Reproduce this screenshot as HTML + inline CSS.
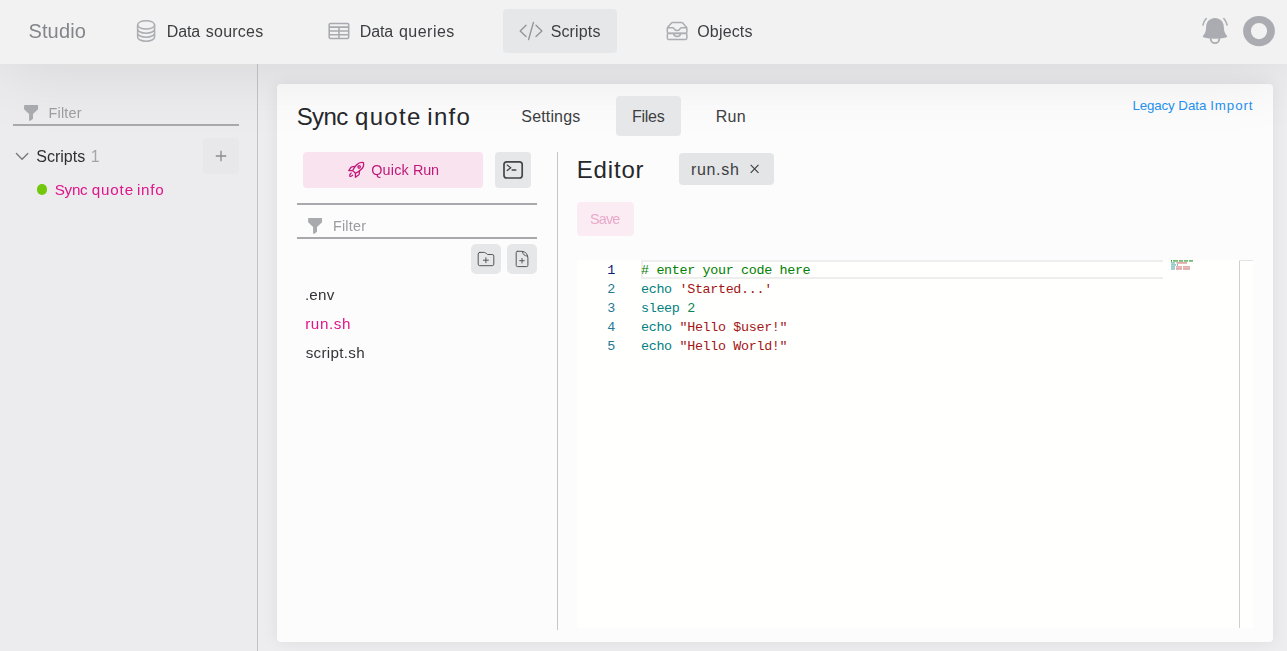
<!DOCTYPE html>
<html lang="en"><head><meta charset="utf-8"><title>Studio - Scripts</title>
<style>
html,body{margin:0;padding:0}
body{width:1287px;height:651px;overflow:hidden;position:relative;background:#ececee;font-family:"Liberation Sans",sans-serif;}
.abs{position:absolute}
.t{position:absolute;white-space:nowrap;line-height:1;font-family:"Liberation Sans",sans-serif}
#side{left:0;top:64px;width:257px;height:587px;background:#ececee}
#sideb{left:257px;top:64px;width:1px;height:587px;background:#c3c4c7}
#main{left:258px;top:64px;width:1029px;height:587px;background:#ededef}
#card{left:277px;top:84px;width:996px;height:558px;background:#fcfcfc;border-radius:4px;box-shadow:0 0 16px rgba(0,0,20,.07)}
#nav{left:0;top:0;width:1287px;height:64px;background:#f2f2f2;box-shadow:0 0 76px rgba(0,0,10,.118)}
.ln{position:absolute;background:#a8a9ad}
.btn{position:absolute;border-radius:4px;background:#e6e7e9}
svg{position:absolute;overflow:visible}
.code{position:absolute;white-space:pre;font-family:"Liberation Mono",monospace;font-size:13.4px;letter-spacing:-0.34px;line-height:19px;height:19px}
</style></head>
<body>
<div id="side" class="abs"></div><div id="sideb" class="abs"></div><div id="main" class="abs"></div>
<div id="card" class="abs"></div>
<div id="nav" class="abs"></div>
<div class="btn" style="left:503px;top:9px;width:114px;height:44px;background:#e6e7e9"></div>
<div class="btn" style="left:616px;top:96px;width:65px;height:40px;background:#e6e7e9"></div>
<div class="ln" style="left:13px;top:124px;width:226px;height:2px"></div>
<div class="btn" style="left:203px;top:138px;width:36px;height:36px;background:#e8e8ea"></div>
<div class="abs" style="left:36.8px;top:184.4px;width:10.6px;height:10.6px;border-radius:50%;background:#73c70c"></div>
<div class="btn" style="left:303px;top:152px;width:180px;height:36px;background:#f9e3ee"></div>
<div class="btn" style="left:495px;top:152px;width:36px;height:36px"></div>
<div class="ln" style="left:297px;top:203px;width:240px;height:2px"></div>
<div class="ln" style="left:297px;top:237px;width:240px;height:2px"></div>
<div class="btn" style="left:471px;top:244px;width:30px;height:30px;border-radius:5px"></div>
<div class="btn" style="left:507px;top:244px;width:30px;height:30px;border-radius:5px"></div>
<div class="abs" style="left:557px;top:152px;width:1px;height:478px;background:#c6c7c9"></div>
<div class="btn" style="left:679px;top:153px;width:95px;height:32px;background:#e4e5e7"></div>
<div class="btn" style="left:577px;top:202px;width:57px;height:34px;background:#fbecf3"></div>
<div class="abs" style="left:577px;top:260px;width:676px;height:368px;background:#fffffe"></div>
<div class="abs" style="left:641px;top:260px;width:522px;height:19px;box-sizing:border-box;border:2px solid #eeeeee;border-right:0"></div>
<div class="abs" style="left:1239px;top:260px;width:1px;height:368px;background:#d0d0d0"></div>
<div class="abs" style="left:1239px;top:260px;width:14px;height:1px;background:#e4e4e4"></div>
<div class="code" style="left:607.3px;top:260.8px;color:#0b216f">1</div>
<div class="code" style="left:641px;top:260.8px;color:#000"><span style="color:#008000"># enter your code here</span></div>
<div class="code" style="left:607.3px;top:279.8px;color:#237893">2</div>
<div class="code" style="left:641px;top:279.8px;color:#000"><span style="color:#008080">echo</span> <span style="color:#a31515">'Started...'</span></div>
<div class="code" style="left:607.3px;top:298.8px;color:#237893">3</div>
<div class="code" style="left:641px;top:298.8px;color:#000"><span style="color:#008080">sleep</span> <span style="color:#098658">2</span></div>
<div class="code" style="left:607.3px;top:317.8px;color:#237893">4</div>
<div class="code" style="left:641px;top:317.8px;color:#000"><span style="color:#008080">echo</span> <span style="color:#a31515">"Hello $user!"</span></div>
<div class="code" style="left:607.3px;top:336.8px;color:#237893">5</div>
<div class="code" style="left:641px;top:336.8px;color:#000"><span style="color:#008080">echo</span> <span style="color:#a31515">"Hello World!"</span></div>
<span class="t" id="t_title" style="left:296.66px;top:104.78px;font-size:24px;color:#26272b"><span style="letter-spacing:-0.606px">Sync</span> <span style="letter-spacing:1.313px;margin-left:0.780px">quote</span> <span style="letter-spacing:1.340px;margin-left:-1.081px">info</span></span>
<span class="t" id="t_set" style="left:521.37px;top:109.16px;font-size:16px;letter-spacing:0.149px;color:#3d3e42">Settings</span>
<span class="t" id="t_files" style="left:632.01px;top:109.16px;font-size:16px;letter-spacing:-0.288px;color:#3d3e42">Files</span>
<span class="t" id="t_run" style="left:715.81px;top:109.16px;font-size:16px;letter-spacing:0.222px;color:#3d3e42">Run</span>
<span class="t" id="t_leg" style="left:1132.50px;top:98.92px;font-size:13.33px;color:#2590ee"><span style="letter-spacing:-0.154px">Legacy</span> <span style="letter-spacing:-0.005px;margin-left:0.002px">Data</span> <span style="letter-spacing:0.926px;margin-left:0.050px">Import</span></span>
<span class="t" id="t_editor" style="left:576.78px;top:157.98px;font-size:24px;letter-spacing:0.820px;color:#26272b">Editor</span>
<span class="t" id="t_chip" style="left:690.88px;top:161.76px;font-size:16px;letter-spacing:0.704px;color:#3d3e42">run.sh</span>
<div id="txt" class="abs" style="left:0;top:0;width:1287px;height:651px;will-change:transform">
<svg style="left:0;top:0" width="1287" height="651" viewBox="0 0 1287 651"><rect x="1171.0" y="260.1" width="1.0" height="1.6" fill="#008000" fill-opacity="0.85"/><rect x="1173.0" y="260.1" width="5.0" height="1.6" fill="#008000" fill-opacity="0.6"/><rect x="1179.0" y="260.1" width="4.0" height="1.6" fill="#008000" fill-opacity="0.6"/><rect x="1184.0" y="260.1" width="4.0" height="1.6" fill="#008000" fill-opacity="0.6"/><rect x="1189.0" y="260.1" width="4.0" height="1.6" fill="#008000" fill-opacity="0.6"/><rect x="1171.0" y="262.1" width="4.0" height="1.6" fill="#1a8c8c" fill-opacity="0.5"/><rect x="1176.5" y="262.1" width="10.5" height="1.6" fill="#b02a2a" fill-opacity="0.45"/><rect x="1171.0" y="264.1" width="5.0" height="1.6" fill="#1a8c8c" fill-opacity="0.5"/><rect x="1177.0" y="264.1" width="1.0" height="1.6" fill="#098658" fill-opacity="0.6"/><rect x="1171.0" y="266.1" width="4.0" height="1.6" fill="#1a8c8c" fill-opacity="0.5"/><rect x="1176.0" y="266.1" width="6.0" height="1.6" fill="#b02a2a" fill-opacity="0.42"/><rect x="1183.0" y="266.1" width="7.0" height="1.6" fill="#b02a2a" fill-opacity="0.42"/><rect x="1171.0" y="268.1" width="4.0" height="1.6" fill="#1a8c8c" fill-opacity="0.5"/><rect x="1176.0" y="268.1" width="6.0" height="1.6" fill="#b02a2a" fill-opacity="0.45"/><rect x="1183.0" y="268.1" width="7.0" height="1.6" fill="#b02a2a" fill-opacity="0.45"/><g fill="none" stroke="#acadb2" stroke-width="1.5" stroke-linecap="round" stroke-linejoin="round">
<ellipse cx="146.1" cy="24.9" rx="8.5" ry="4.2"/>
<path d="M137.6 24.9V37M154.6 24.9V37M137.6 29a8.5 4.2 0 0 0 17 0M137.6 33a8.5 4.2 0 0 0 17 0M137.6 37a8.5 4.2 0 0 0 17 0"/>
</g>
<g fill="none" stroke="#a9aaaf" stroke-width="1.55" stroke-linejoin="round">
<rect x="329.2" y="23.5" width="19.5" height="15" rx="1.2"/>
<path d="M329.2 27.1H348.7M329.2 31H348.7M329.2 34.8H348.7M339 27.1V38.5"/>
</g>
<g fill="none" stroke="#93959b" stroke-width="1.35" stroke-linecap="round" stroke-linejoin="round">
<path d="M526 25.3L520.2 31L526 36.6M533.4 22.5L528.6 39.5M536 25.3L541.9 31L536 36.6"/>
</g>
<g fill="none" stroke="#acadb2" stroke-width="1.5" stroke-linecap="round" stroke-linejoin="round">
<path d="M667.4 27.8L671.2 23.2Q671.8 22.6 672.6 22.6H681.6Q682.4 22.6 683 23.2L686.8 27.8"/>
<path d="M668.6 27.8H672.6Q673.6 27.8 674.2 28.8Q675.2 30.6 677.1 30.6Q679 30.6 680 28.8Q680.6 27.8 681.6 27.8H685.6Q686.9 27.8 686.9 29.1V32Q686.9 33.3 685.6 33.3H668.6Q667.3 33.3 667.3 32V29.1Q667.3 27.8 668.6 27.8Z"/>
<path d="M668.6 33.6H685.6Q686.9 33.6 686.9 34.9V38.1Q686.9 39.4 685.6 39.4H668.6Q667.3 39.4 667.3 38.1V34.9Q667.3 33.6 668.6 33.6ZM673.6 33.8Q674.2 36.4 677.1 36.4Q680 36.4 680.6 33.8"/>
</g>
<g fill="#abacb1" stroke="none">
<path d="M1215 18C1210.2 18 1206.4 21.6 1206.2 26.2C1206 31 1205.2 33.2 1203 35.8C1202.6 36.4 1203 37.2 1203.8 37.4C1207.5 38.3 1211.2 38.8 1215 38.8C1218.8 38.8 1222.5 38.3 1226.2 37.4C1227 37.2 1227.4 36.4 1227 35.8C1224.8 33.2 1224 31 1223.8 26.2C1223.6 21.6 1219.8 18 1215 18Z"/>
</g>
<g fill="none" stroke="#abacb1" stroke-width="1.5" stroke-linecap="round">
<path d="M1210.7 38.8A4.3 4.4 0 0 0 1219.3 38.8" stroke-width="1.8"/>
<path d="M1206.2 18.6Q1203.6 21.6 1202.9 25M1223.8 18.6Q1226.4 21.6 1227.1 25"/>
</g>
<path fill="#abacb1" fill-rule="evenodd" d="M1243.1 31.05a15.9 15.1 0 1 0 31.8 0a15.9 15.1 0 1 0 -31.8 0ZM1250.9 31.05a8.1 8.05 0 1 1 16.2 0a8.1 8.05 0 1 1 -16.2 0Z"/>
<g fill="#a9aaae">
<path d="M308.6 218H321.55Q322.05 218 322.05 218.5V222.3L317 227.1V231.8L314.4 233.75H313.1V227.1L308.1 222.3V218.5Q308.1 218 308.6 218Z"/>
<path transform="translate(-284 -113)" d="M308.6 218H321.55Q322.05 218 322.05 218.5V222.3L317 227.1V231.8L314.4 233.75H313.1V227.1L308.1 222.3V218.5Q308.1 218 308.6 218Z"/>
</g>
<path d="M16.4 153.5L22.1 159.3L27.8 153.5" fill="none" stroke="#77787c" stroke-width="1.35" stroke-linecap="round" stroke-linejoin="round"/>
<path d="M215.8 156H226.2M221 150.8V161.2" fill="none" stroke="#8a8b8f" stroke-width="1.3"/>
<g transform="translate(358.1 167.9) rotate(45) scale(0.91)" fill="none" stroke="#c0187a" stroke-width="1.4" stroke-linecap="round" stroke-linejoin="round">
<path d="M0 -8.3C2.3 -6.9 3.6 -4.4 3.6 -1.4C3.6 1.6 3 4.2 2.1 6.3H-2.1C-3 4.2 -3.6 1.6 -3.6 -1.4C-3.6 -4.4 -2.3 -6.9 0 -8.3Z"/>
<circle cx="0" cy="-1.6" r="1.3"/>
<path d="M-3.5 1.2L-5.6 3.9Q-6 4.5 -5.9 5.2L-5.2 9.4L-2.4 6.5M3.5 1.2L5.6 3.9Q6 4.5 5.9 5.2L5.2 9.4L2.4 6.5"/>
<path d="M-1.4 9.4Q-1.7 12.2 0 12.9Q1.7 12.2 1.4 9.9"/>
</g>
<g fill="none" stroke="#45464a" stroke-linecap="round" stroke-linejoin="round">
<rect x="504" y="161.8" width="18.2" height="16.2" rx="2.8" stroke-width="1.7"/>
<path d="M507.2 165.1L510.8 167.8L507.2 170.5" stroke-width="1.3"/>
<path d="M512.2 169.9H515.8" stroke-width="1.5"/>
</g>
<g fill="none" stroke="#55565a" stroke-width="1" stroke-linejoin="round" stroke-linecap="round">
<path d="M479.8 252.4H484.4Q485.2 252.4 485.8 253L486.6 253.9Q487.2 254.5 488 254.5H492.2Q493.8 254.5 493.8 256.1V264.1Q493.8 265.7 492.2 265.7H479.8Q478.2 265.7 478.2 264.1V254Q478.2 252.4 479.8 252.4Z"/>
<path d="M483.4 260.2H488.4M485.9 257.7V262.7"/>
<path d="M517.4 251.3H522Q527.8 252.2 527.9 258V265.4Q527.9 266.6 526.7 266.6H517.4Q516.2 266.6 516.2 265.4V252.5Q516.2 251.3 517.4 251.3Z"/>
<path d="M522.6 251.5Q522.2 255.6 527.6 256.2"/>
<path d="M519.7 260.7H524.3M522 258.4V263"/>
</g>
<path d="M750.7 164.9L758.5 172.8M758.5 164.9L750.7 172.8" fill="none" stroke="#3d3e42" stroke-width="1.15"/>
</svg>
<span class="t" id="t_studio" style="left:28.39px;top:21.17px;font-size:20px;letter-spacing:0.172px;color:#84858a">Studio</span>
<span class="t" id="t_ds" style="left:166.71px;top:24.26px;font-size:16px;color:#3d3e42"><span style="letter-spacing:-0.109px">Data</span> <span style="letter-spacing:0.241px;margin-left:1.229px">sources</span></span>
<span class="t" id="t_dq" style="left:359.71px;top:24.26px;font-size:16px;color:#3d3e42"><span style="letter-spacing:-0.112px">Data</span> <span style="letter-spacing:0.484px;margin-left:1.439px">queries</span></span>
<span class="t" id="t_sc" style="left:550.67px;top:24.26px;font-size:16px;letter-spacing:0.148px;color:#3d3e42">Scripts</span>
<span class="t" id="t_ob" style="left:697.26px;top:24.26px;font-size:16px;letter-spacing:0.159px;color:#3d3e42">Objects</span>
<span class="t" id="t_f1" style="left:48.61px;top:105.81px;font-size:14.4px;letter-spacing:0.169px;color:#9b9ca0">Filter</span>
<span class="t" id="t_sc2" style="left:36.27px;top:148.76px;font-size:16px;letter-spacing:0.010px;color:#2e2f33">Scripts</span>
<span class="t" id="t_one" style="left:90.79px;top:148.76px;font-size:16px;letter-spacing:0.000px;color:#a5a6aa">1</span>
<span class="t" id="t_sqi" style="left:54.79px;top:182.13px;font-size:15.2px;color:#e0158a"><span style="letter-spacing:-0.305px">Sync</span> <span style="letter-spacing:0.833px;margin-left:0.186px">quote</span> <span style="letter-spacing:0.799px;margin-left:-1.250px">info</span></span>
<span class="t" id="t_qr" style="left:371.21px;top:163.31px;font-size:14.4px;color:#c0187a"><span style="letter-spacing:0.205px">Quick</span> <span style="letter-spacing:-0.178px;margin-left:-0.007px">Run</span></span>
<span class="t" id="t_f2" style="left:332.91px;top:219.01px;font-size:14.4px;letter-spacing:0.215px;color:#9b9ca0">Filter</span>
<span class="t" id="t_env" style="left:304.92px;top:287.13px;font-size:15.2px;letter-spacing:0.249px;color:#333438">.env</span>
<span class="t" id="t_runsh" style="left:305.22px;top:316.13px;font-size:15.2px;letter-spacing:0.582px;color:#e0158a">run.sh</span>
<span class="t" id="t_script" style="left:305.65px;top:345.13px;font-size:15.2px;letter-spacing:0.308px;color:#333438">script.sh</span>
<span class="t" id="t_save" style="left:589.96px;top:211.61px;font-size:14.4px;letter-spacing:-0.816px;color:#e9a8c9">Save</span>
</div>
</body></html>
